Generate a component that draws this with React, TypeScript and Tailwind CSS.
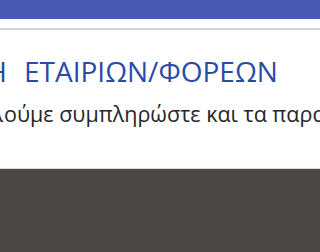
import React from "react";

export default function App() {
  return (
    <div className="w-full min-w-[224px] h-[252px] overflow-hidden bg-white flex flex-col" style={{ fontFamily: '"Open Sans", "Noto Sans", sans-serif' }}>
      <div className="h-[19px] bg-[#4a5ab4] shrink-0" />
      <div className="h-[9px] shrink-0" />
      <div className="h-[2px] bg-[#d2d2d2] shrink-0" />
      <div className="flex-1 flex flex-col">
        <div className="mt-[23px] flex whitespace-nowrap text-[28px] leading-[36px] text-[#2a4ca8]">
          <div className="w-[7px] shrink-0 flex justify-end">
            <span>ΚΑΤΑΧΩΡΗΣΗ</span>
          </div>
          <span className="ml-[17px]">ΕΤΑΙΡΙΩΝ/ΦΟΡΕΩΝ</span>
        </div>
        <div className="mt-[11px] flex whitespace-nowrap text-[21.5px] leading-[28px] text-[#262626]">
          <div className="w-[3px] shrink-0 flex justify-end">
            <span>Παρακαλ</span>
          </div>
          <span className="ml-[1px]">ούμε συμπληρώστε και τα παρακάτω</span>
        </div>
      </div>
      <div className="h-[1px] bg-[#dcdcdc] shrink-0" />
      <div className="h-[83px] bg-[#4a4745] shrink-0" />
    </div>
  );
}
